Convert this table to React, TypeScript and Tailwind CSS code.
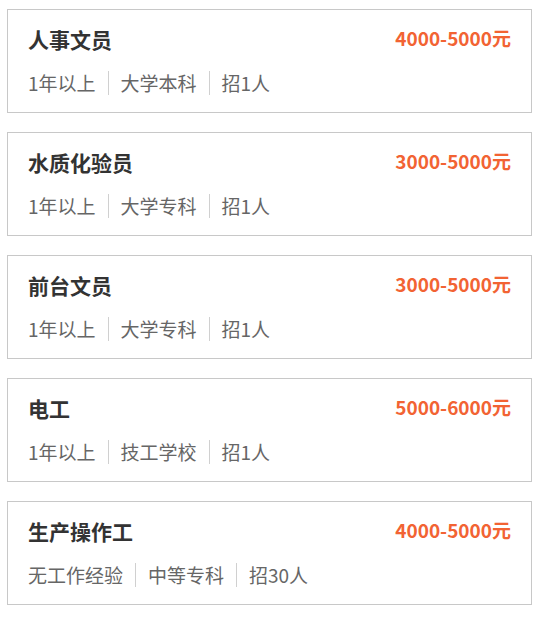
const jobs = [
  { title: "人事文员", salary: "4000-5000元", tags: ["1年以上", "大学本科", "招1人"] },
  { title: "水质化验员", salary: "3000-5000元", tags: ["1年以上", "大学专科", "招1人"] },
  { title: "前台文员", salary: "3000-5000元", tags: ["1年以上", "大学专科", "招1人"] },
  { title: "电工", salary: "5000-6000元", tags: ["1年以上", "技工学校", "招1人"] },
  { title: "生产操作工", salary: "4000-5000元", tags: ["无工作经验", "中等专科", "招30人"] },
];

export default function App() {
  return (
    <div
      className="flex flex-col gap-[19px] bg-white pl-[7px] pr-[8px] pt-[9px]"
      style={{ fontFamily: '"Microsoft YaHei", "Noto Sans CJK SC", sans-serif' }}
    >
      {jobs.map((job) => (
        <div key={job.title} className="h-[104px] border border-[#c8c8c8] bg-white px-[20px] pt-[15px]">
          <div className="flex items-center justify-between">
            <h3 className="text-[21px] font-bold leading-[28px] text-[#333]">{job.title}</h3>
            <span className="-mt-[2px] text-[19px] font-bold leading-[28px] text-[#f26333]">{job.salary}</span>
          </div>
          <div className="mt-[17px] flex items-center text-[19px] leading-[26px] text-[#666]">
            {job.tags.map((t, i) => (
              <span key={t} className="flex items-center">
                {i > 0 && <span className="mx-[12px] h-[24px] w-px bg-[#d0d0d0]" />}
                {t}
              </span>
            ))}
          </div>
        </div>
      ))}
    </div>
  );
}
